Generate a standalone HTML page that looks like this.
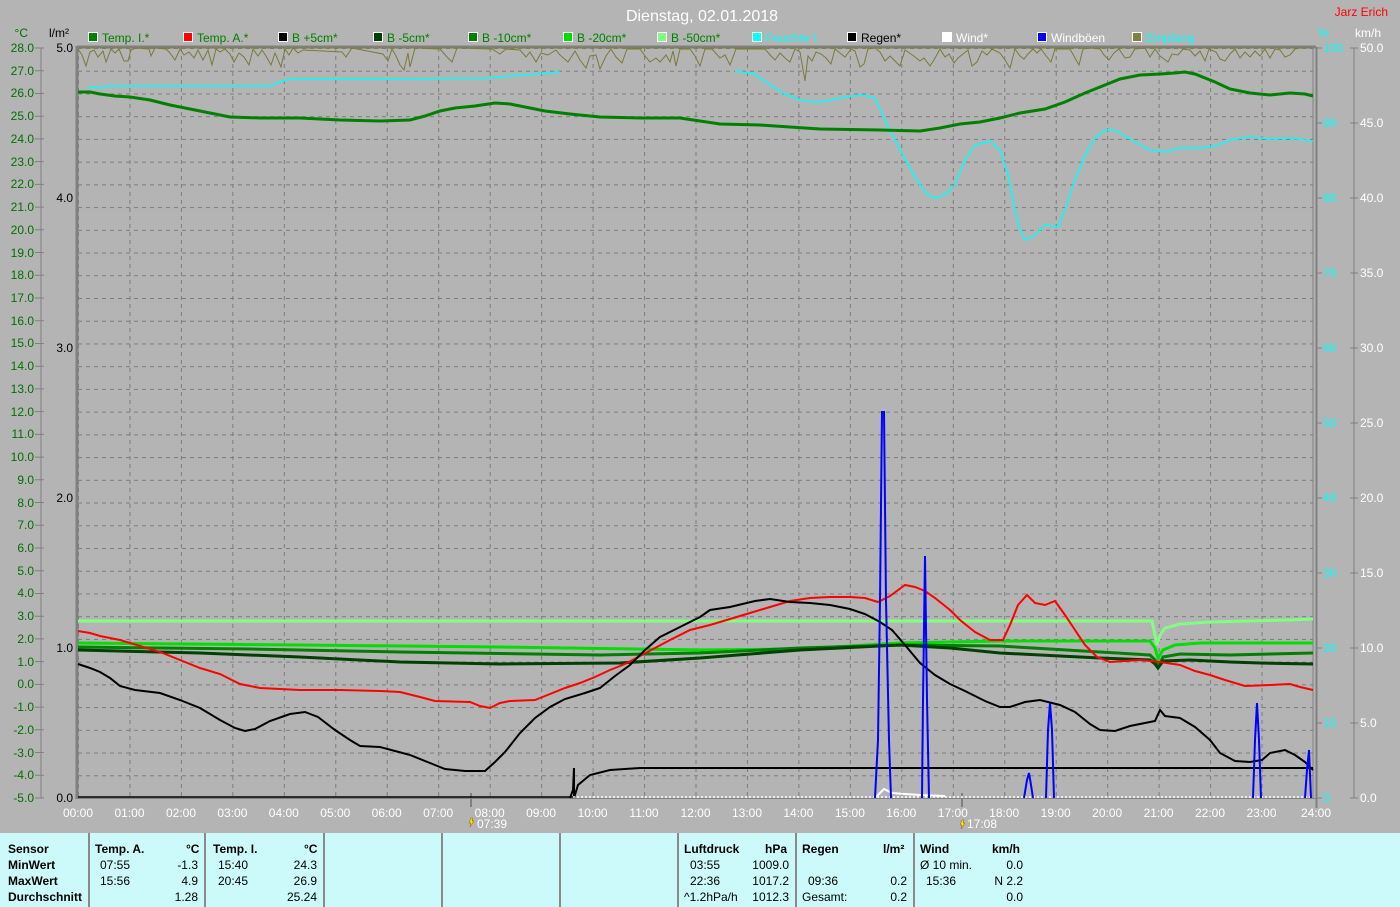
<!DOCTYPE html>
<html><head><meta charset="utf-8"><style>
html,body{margin:0;padding:0;background:#b4b4b4;}
body{width:1400px;height:907px;overflow:hidden;position:relative;font-family:"Liberation Sans",sans-serif;}
svg{position:absolute;left:0;top:0;}
.panel{position:absolute;left:0;top:833px;width:1400px;height:74px;background:#ccfafa;font-size:12px;color:#000;}
.sep{position:absolute;top:0;width:2px;height:74px;background:#8a8a8a;}
.c{position:absolute;white-space:nowrap;}
.b{font-weight:bold;}
.r{text-align:right;}
</style></head><body>
<svg width="1400" height="907" viewBox="0 0 1400 907" font-family="Liberation Sans, sans-serif">
<defs>
<pattern id="hg" x="78" y="48" width="1235" height="22.727" patternUnits="userSpaceOnUse">
<line x1="0" y1="0.5" x2="1235" y2="0.5" stroke="#7c7c7c" stroke-dasharray="4,4"/>
</pattern>
<pattern id="vg" x="78" y="48" width="51.458" height="750" patternUnits="userSpaceOnUse">
<line x1="0.5" y1="0" x2="0.5" y2="750" stroke="#7c7c7c" stroke-dasharray="4,4"/>
</pattern>
</defs>
<rect x="78" y="48" width="1235" height="750" fill="url(#hg)"/>
<rect x="78" y="48" width="1235" height="750" fill="url(#vg)"/>
<!-- frame -->
<line x1="77" y1="47" x2="1316" y2="47" stroke="#808080" stroke-width="3"/>
<line x1="77" y1="46" x2="77" y2="799" stroke="#808080" stroke-width="3"/>
<line x1="1313" y1="47" x2="1313" y2="799" stroke="#808080" stroke-width="1"/>
<line x1="1316.5" y1="47" x2="1316.5" y2="808" stroke="#808080" stroke-width="2"/>
<line x1="77" y1="798.5" x2="1316" y2="798.5" stroke="#808080" stroke-width="1"/>
<!-- left axis -->
<line x1="41" y1="48" x2="41" y2="798" stroke="#808080"/>
<line x1="1354" y1="48" x2="1354" y2="798" stroke="#808080"/>
<g stroke="#808080">
<path d="M35 48h9M35 70.7h9M35 93.5h9M35 116.2h9M35 138.9h9M35 161.6h9M35 184.4h9M35 207.1h9M35 229.8h9M35 252.5h9M35 275.3h9M35 298h9M35 320.7h9M35 343.5h9M35 366.2h9M35 388.9h9M35 411.6h9M35 434.4h9M35 457.1h9M35 479.8h9M35 502.5h9M35 525.3h9M35 548h9M35 570.7h9M35 593.5h9M35 616.2h9M35 638.9h9M35 661.6h9M35 684.4h9M35 707.1h9M35 729.8h9M35 752.5h9M35 775.3h9M35 798h9"/>
<path d="M1350 48h8M1350 123h8M1350 198h8M1350 273h8M1350 348h8M1350 423h8M1350 498h8M1350 573h8M1350 648h8M1350 723h8M1350 798h8"/>
<path d="M1317 48h5M1317 123h5M1317 198h5M1317 273h5M1317 348h5M1317 423h5M1317 498h5M1317 573h5M1317 648h5M1317 723h5M1317 798h5"/>
</g>
<g fill="#007000" font-size="12" text-anchor="end">
<text x="34" y="52">28.0</text><text x="34" y="75">27.0</text><text x="34" y="97">26.0</text><text x="34" y="120">25.0</text><text x="34" y="143">24.0</text><text x="34" y="166">23.0</text><text x="34" y="188">22.0</text><text x="34" y="211">21.0</text><text x="34" y="234">20.0</text><text x="34" y="257">19.0</text><text x="34" y="279">18.0</text><text x="34" y="302">17.0</text><text x="34" y="325">16.0</text><text x="34" y="347">15.0</text><text x="34" y="370">14.0</text><text x="34" y="393">13.0</text><text x="34" y="416">12.0</text><text x="34" y="438">11.0</text><text x="34" y="461">10.0</text><text x="34" y="484">9.0</text><text x="34" y="507">8.0</text><text x="34" y="529">7.0</text><text x="34" y="552">6.0</text><text x="34" y="575">5.0</text><text x="34" y="597">4.0</text><text x="34" y="620">3.0</text><text x="34" y="643">2.0</text><text x="34" y="666">1.0</text><text x="34" y="688">0.0</text><text x="34" y="711">-1.0</text><text x="34" y="734">-2.0</text><text x="34" y="757">-3.0</text><text x="34" y="779">-4.0</text><text x="34" y="802">-5.0</text>
</g>
<text x="28" y="37" fill="#007000" font-size="12" text-anchor="end">°C</text>
<g fill="#000" font-size="12" text-anchor="end">
<text x="69" y="37">l/m²</text>
<text x="73" y="52">5.0</text><text x="73" y="202">4.0</text><text x="73" y="352">3.0</text><text x="73" y="502">2.0</text><text x="73" y="652">1.0</text><text x="73" y="802">0.0</text>
</g>
<g fill="#00ffff" font-size="12">
<text x="1318" y="37">%</text>
<text x="1323" y="52">100</text><text x="1323" y="127">90</text><text x="1323" y="202">80</text><text x="1323" y="277">70</text><text x="1323" y="352">60</text><text x="1323" y="427">50</text><text x="1323" y="502">40</text><text x="1323" y="577">30</text><text x="1323" y="652">20</text><text x="1323" y="727">10</text><text x="1323" y="802">0</text>
</g>
<g fill="#fff" font-size="12">
<text x="1355" y="37">km/h</text>
<text x="1360" y="52">50.0</text><text x="1360" y="127">45.0</text><text x="1360" y="202">40.0</text><text x="1360" y="277">35.0</text><text x="1360" y="352">30.0</text><text x="1360" y="427">25.0</text><text x="1360" y="502">20.0</text><text x="1360" y="577">15.0</text><text x="1360" y="652">10.0</text><text x="1360" y="727">5.0</text><text x="1360" y="802">0.0</text>
</g>
<!-- x labels -->
<g fill="#fff" font-size="12" text-anchor="middle">
<text x="78" y="817">00:00</text><text x="129.5" y="817">01:00</text><text x="181" y="817">02:00</text><text x="232.4" y="817">03:00</text><text x="283.8" y="817">04:00</text><text x="335.3" y="817">05:00</text><text x="386.7" y="817">06:00</text><text x="438.2" y="817">07:00</text><text x="489.7" y="817">08:00</text><text x="541.1" y="817">09:00</text><text x="592.6" y="817">10:00</text><text x="644" y="817">11:00</text><text x="695.5" y="817">12:00</text><text x="747" y="817">13:00</text><text x="798.4" y="817">14:00</text><text x="849.9" y="817">15:00</text><text x="901.3" y="817">16:00</text><text x="952.8" y="817">17:00</text><text x="1004.2" y="817">18:00</text><text x="1055.7" y="817">19:00</text><text x="1107.2" y="817">20:00</text><text x="1158.6" y="817">21:00</text><text x="1210" y="817">22:00</text><text x="1261.5" y="817">23:00</text><text x="1316" y="817">24:00</text>
<text x="492" y="828">07:39</text><text x="982" y="828">17:08</text>
</g>
<line x1="471" y1="793" x2="471" y2="807" stroke="#808080" stroke-width="2"/>
<line x1="962" y1="793" x2="962" y2="807" stroke="#808080" stroke-width="2"/>
<path d="M471 818l-2 5h2l-1 4 4-6h-2l1-3z" fill="#ffe000" stroke="#806000" stroke-width="0.5"/>
<path d="M962 820l-2 5h2l-1 4 4-6h-2l1-3z" fill="#ffe000" stroke="#806000" stroke-width="0.5"/>
<!-- title -->
<text x="702" y="21" fill="#fff" font-size="16" text-anchor="middle">Dienstag, 02.01.2018</text>
<text x="1388" y="16" fill="#ff0000" font-size="12" text-anchor="end">Jarz Erich</text>
<!-- legend -->
<g font-size="12">
<rect x="88.5" y="32.5" width="9" height="9" fill="#008000" stroke="#fff"/><text x="102" y="42" fill="#008000">Temp. I.*</text>
<rect x="183.5" y="32.5" width="9" height="9" fill="#ff0000" stroke="#fff"/><text x="197" y="42" fill="#008000">Temp. A.*</text>
<rect x="278.5" y="32.5" width="9" height="9" fill="#000" stroke="#fff"/><text x="292" y="42" fill="#008000">B +5cm*</text>
<rect x="373.5" y="32.5" width="9" height="9" fill="#004000" stroke="#fff"/><text x="387" y="42" fill="#008000">B -5cm*</text>
<rect x="468.5" y="32.5" width="9" height="9" fill="#008000" stroke="#fff"/><text x="482" y="42" fill="#008000">B -10cm*</text>
<rect x="563.5" y="32.5" width="9" height="9" fill="#00e000" stroke="#fff"/><text x="577" y="42" fill="#008000">B -20cm*</text>
<rect x="657.5" y="32.5" width="9" height="9" fill="#80ff80" stroke="#fff"/><text x="671" y="42" fill="#008000">B -50cm*</text>
<rect x="752.5" y="32.5" width="9" height="9" fill="#00ffff" stroke="#fff"/><text x="766" y="42" fill="#00ffff">Feuchte I.</text>
<rect x="847.5" y="32.5" width="9" height="9" fill="#000" stroke="#fff"/><text x="861" y="42" fill="#000">Regen*</text>
<rect x="942.5" y="32.5" width="9" height="9" fill="#fff" stroke="#fff"/><text x="956" y="42" fill="#fff">Wind*</text>
<rect x="1037.5" y="32.5" width="9" height="9" fill="#0000ff" stroke="#fff"/><text x="1051" y="42" fill="#fff">Windböen</text>
<rect x="1132.5" y="32.5" width="9" height="9" fill="#808040" stroke="#fff"/><text x="1146" y="42" fill="#00ffff">Empfang</text>
</g>
<!-- Empfang -->
<polyline fill="none" stroke="#7a7a3a" stroke-width="1" points="78,49 82,55 86,66 90,52 94,50 98,57 103,51 106,62 111,49 115,53 119,49 124,61 128,61 131,50 136,48 149,49 151,56 155,48 166,49 170,53 175,60 180,49 184,55 189,52 194,58 198,50 203,60 208,50 212,65 216,49 220,52 225,49 230,54 234,62 239,53 244,57 249,65 253,49 258,56 262,50 266,56 271,65 275,53 281,67 285,49 289,55 293,48 298,53 303,50 342,52 346,57 352,48 383,54 388,61 392,49 396,56 400,65 404,70 408,53 410,67 415,48 440,49 447,57 452,62 457,48 492,49 500,54 506,49 520,50 526,57 530,52 536,62 541,53 548,55 556,50 560,55 568,62 575,51 580,60 586,68 590,56 596,55 600,69 606,56 611,49 616,57 622,63 627,49 640,49 645,56 650,62 656,58 660,62 666,55 670,62 673,51 676,66 680,49 690,49 695,56 700,66 705,49 712,49 720,58 725,55 730,65 736,49 765,49 770,55 775,60 780,53 785,58 790,62 795,49 800,52 805,81 808,56 812,61 816,52 821,54 826,58 831,64 835,49 840,53 845,57 851,49 855,51 860,67 864,64 868,49 875,48 880,52 885,61 890,56 895,61 900,66 905,50 911,54 915,57 920,61 924,58 930,66 934,60 940,49 945,57 949,54 954,63 958,58 963,54 968,50 972,66 977,62 982,51 987,55 992,49 1000,53 1005,60 1010,68 1015,49 1020,56 1024,59 1028,54 1033,49 1037,53 1041,49 1047,57 1051,62 1055,49 1070,49 1075,58 1079,65 1083,49 1090,48 1100,49 1104,55 1109,60 1114,53 1119,49 1125,58 1130,57 1135,49 1145,48 1150,57 1155,49 1160,56 1168,62 1172,54 1178,55 1183,49 1190,50 1195,56 1200,51 1205,61 1209,49 1216,52 1220,59 1225,61 1230,54 1235,49 1240,58 1245,52 1250,57 1255,51 1260,56 1265,49 1270,58 1275,49 1280,50 1285,57 1290,55 1295,49 1300,48 1313,48"/>
<line x1="78" y1="48" x2="1313" y2="48" stroke="#808040"/>
<!-- cyan humidity -->
<polyline fill="none" stroke="#00ffff" stroke-width="1.5" points="88,88 95,87 100,88 110,86 270,86 280,82 290,79 400,79 490,78 510,76 560,72"/>
<polyline fill="none" stroke="#00ffff" stroke-width="1.5" points="735,71 755,74 770,85 785,94 800,100 815,102 828,101 845,97 862,95 875,98 884,118 890,130 900,150 910,168 920,185 928,195 935,198 945,195 955,185 965,160 975,145 990,141 1000,150 1008,175 1015,210 1020,230 1025,240 1035,235 1045,225 1058,227 1065,210 1075,180 1085,155 1095,138 1105,130 1115,130 1125,136 1140,145 1150,150 1165,152 1180,148 1200,148 1215,146 1230,140 1250,137 1270,139 1290,138 1313,141"/>
<!-- Temp I -->
<polyline fill="none" stroke="#008000" stroke-width="3" points="78,92 90,92 100,94 115,96 130,97 150,100 170,105 190,109 210,113 230,117 260,118 300,118 340,120 380,121 410,120 425,116 440,111 455,108 475,106 495,103 510,104 525,107 545,111 570,114 600,117 640,118 680,118 700,121 720,124 760,125 790,127 820,129 880,130 920,131 940,128 960,124 980,122 1000,118 1020,113 1045,109 1065,102 1085,93 1105,85 1120,79 1140,75 1160,74 1175,73 1185,72 1195,74 1215,82 1230,89 1250,93 1270,95 1290,93 1305,94 1313,96"/>
<!-- B -50 light green -->
<polyline fill="none" stroke="#80ff80" stroke-width="3" points="78,621 1152,621 1154,630 1157,645 1160,635 1165,628 1180,624 1210,622 1250,621 1290,620 1313,619"/>
<!-- B -20 lime -->
<polyline fill="none" stroke="#00e000" stroke-width="3" points="78,643 300,645 500,647 700,650 800,649 900,643 1000,641 1150,641 1155,648 1158,658 1163,650 1175,645 1200,643 1313,643"/>
<!-- B -10 green -->
<polyline fill="none" stroke="#008000" stroke-width="3" points="78,647 250,649 400,652 600,655 700,653 800,648 900,645 1000,646 1100,652 1150,655 1155,660 1158,667 1163,657 1180,654 1230,655 1313,653"/>
<!-- B -5 dark green -->
<polyline fill="none" stroke="#004000" stroke-width="3" points="78,650 200,653 300,657 400,662 500,664 620,663 700,658 800,650 900,645 950,648 1000,653 1060,656 1100,658 1150,660 1155,664 1158,668 1163,661 1190,660 1230,662 1260,663 1313,664"/>
<!-- Temp A red -->
<polyline fill="none" stroke="#ff0000" stroke-width="2" points="78,631 90,633 100,636 120,640 140,646 160,652 180,660 200,668 220,674 240,684 260,688 280,689 300,690 340,690 380,691 400,692 420,697 435,701 470,702 480,706 490,708 500,703 510,701 535,700 550,694 565,688 580,683 595,677 610,670 625,664 640,656 655,648 670,640 690,630 710,625 730,619 750,613 770,607 790,601 810,598 830,597 850,597 865,598 878,602 890,596 905,585 915,587 925,591 935,598 950,610 960,620 975,632 990,640 1003,640 1010,625 1018,605 1027,595 1035,603 1045,605 1055,601 1065,615 1075,630 1085,645 1097,657 1110,662 1125,661 1140,660 1160,662 1180,665 1195,671 1210,675 1225,680 1245,686 1270,685 1290,684 1300,687 1313,690"/>
<!-- B +5 black -->
<polyline fill="none" stroke="#000" stroke-width="2" points="78,664 90,668 100,672 110,678 120,686 135,690 160,693 180,700 200,708 220,720 235,728 245,731 255,729 270,721 290,714 305,712 318,717 335,730 350,740 360,746 380,747 395,751 410,755 430,763 445,769 465,771 485,771 495,762 505,752 520,733 535,718 550,707 565,699 585,693 600,688 615,676 630,665 645,650 660,637 680,627 700,617 710,610 730,607 755,601 770,599 790,602 810,603 830,605 850,609 865,614 880,622 892,630 905,645 920,663 935,675 950,684 965,691 985,701 1000,707 1010,707 1025,702 1040,700 1060,705 1075,712 1090,724 1100,730 1115,731 1130,726 1145,723 1155,721 1160,710 1165,716 1180,718 1195,727 1210,740 1220,753 1235,761 1250,762 1262,760 1270,753 1285,750 1295,755 1305,762 1313,770"/>
<!-- rain -->
<polyline fill="none" stroke="#000" stroke-width="2" points="570,798 573,790 574,768 574,798 578,785 590,775 610,770 640,768 1313,768"/>
<line x1="573" y1="797" x2="1313" y2="797" stroke="#fff" stroke-width="1.5" stroke-dasharray="2,2"/>
<line x1="78" y1="797" x2="573" y2="797" stroke="#000" stroke-width="1.5"/>
<!-- wind white -->
<polyline fill="none" stroke="#fff" stroke-width="2" points="876,797 884,789 892,793 905,794 920,795 945,796"/>
<!-- gusts -->
<g fill="none" stroke="#0000ff" stroke-width="2">
<polyline points="875,798 878,740 880,600 882,412 884,412 886,600 889,740 891,798"/>
<polyline points="922,798 923,700 925,556 927,700 929,798"/>
<polyline points="1024,798 1027,780 1029,773 1031,785 1033,798"/>
<polyline points="1046,798 1048,730 1050,703 1052,730 1054,798"/>
<polyline points="1253,798 1255,740 1257,703 1259,740 1261,798"/>
<polyline points="1305,798 1307,770 1309,750 1311,798"/>
</g>
</svg>
<div class="panel">
<div class="sep" style="left:88px"></div><div class="sep" style="left:204px"></div><div class="sep" style="left:323px"></div><div class="sep" style="left:441px"></div><div class="sep" style="left:559px"></div><div class="sep" style="left:677px"></div><div class="sep" style="left:795px"></div><div class="sep" style="left:913px"></div>
<div class="c b" style="left:8px;top:9px">Sensor</div>
<div class="c b" style="left:8px;top:25px">MinWert</div>
<div class="c b" style="left:8px;top:41px">MaxWert</div>
<div class="c b" style="left:8px;top:57px">Durchschnitt</div>
<div class="c b" style="left:95px;top:9px">Temp. A.</div><div class="c b" style="left:186px;top:9px">°C</div>
<div class="c" style="left:100px;top:25px">07:55</div><div class="c r" style="left:150px;width:48px;top:25px">-1.3</div>
<div class="c" style="left:100px;top:41px">15:56</div><div class="c r" style="left:150px;width:48px;top:41px">4.9</div>
<div class="c r" style="left:150px;width:48px;top:57px">1.28</div>
<div class="c b" style="left:213px;top:9px">Temp. I.</div><div class="c b" style="left:304px;top:9px">°C</div>
<div class="c" style="left:218px;top:25px">15:40</div><div class="c r" style="left:268px;width:49px;top:25px">24.3</div>
<div class="c" style="left:218px;top:41px">20:45</div><div class="c r" style="left:268px;width:49px;top:41px">26.9</div>
<div class="c r" style="left:268px;width:49px;top:57px">25.24</div>
<div class="c b" style="left:684px;top:9px">Luftdruck</div><div class="c b" style="left:765px;top:9px">hPa</div>
<div class="c" style="left:690px;top:25px">03:55</div><div class="c r" style="left:740px;width:49px;top:25px">1009.0</div>
<div class="c" style="left:690px;top:41px">22:36</div><div class="c r" style="left:740px;width:49px;top:41px">1017.2</div>
<div class="c" style="left:684px;top:57px">^1.2hPa/h</div><div class="c r" style="left:740px;width:49px;top:57px">1012.3</div>
<div class="c b" style="left:802px;top:9px">Regen</div><div class="c b" style="left:883px;top:9px">l/m²</div>
<div class="c" style="left:808px;top:41px">09:36</div><div class="c r" style="left:860px;width:47px;top:41px">0.2</div>
<div class="c" style="left:802px;top:57px">Gesamt:</div><div class="c r" style="left:860px;width:47px;top:57px">0.2</div>
<div class="c b" style="left:920px;top:9px">Wind</div><div class="c b" style="left:992px;top:9px">km/h</div>
<div class="c" style="left:920px;top:25px">Ø 10 min.</div><div class="c r" style="left:975px;width:48px;top:25px">0.0</div>
<div class="c" style="left:926px;top:41px">15:36</div><div class="c r" style="left:975px;width:48px;top:41px">N 2.2</div>
<div class="c r" style="left:975px;width:48px;top:57px">0.0</div>
</div>
</body></html>
